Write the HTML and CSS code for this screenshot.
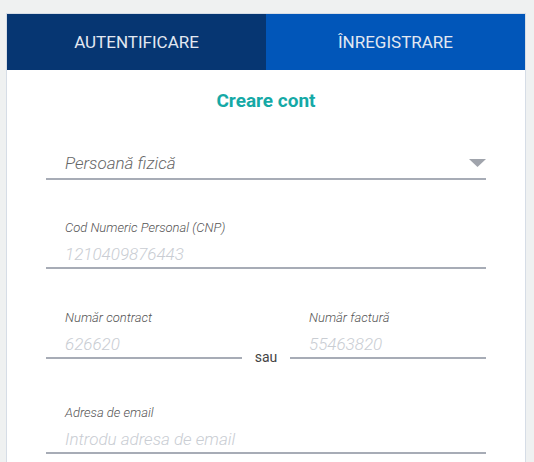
FILE: index.html
```html
<!DOCTYPE html>
<html lang="ro">
  <head>
    <meta charset="UTF-8" />
    <meta name="viewport" content="width=device-width, initial-scale=1.0" />
    <title>Creare cont</title>
    <link rel="stylesheet" href="styles.css">
  </head>
  <body>
    <main class="card">
      <nav class="tabs">
        <a class="tab tab-login" href="#">AUTENTIFICARE</a>
        <a class="tab tab-register" href="#">ÎNREGISTRARE</a>
      </nav>
      <form class="form-register" action="">
        <h2 class="titlu">Creare cont</h2>

        <div class="select">
          <span>Persoană fizică</span>
          <svg class="select-arrow" width="17" height="8" viewBox="0 0 17 8">
            <polygon points="0,0 17,0 8.5,8" fill="#a0a4ac" />
          </svg>
        </div>

        <label class="field">
          <span class="field-label">Cod Numeric Personal (CNP)</span>
          <input type="text" name="cnp" placeholder="1210409876443" />
        </label>

        <div class="field-row">
          <label class="field">
            <span class="field-label">Număr contract</span>
            <input type="text" name="contract" placeholder="626620" />
          </label>
          <span class="sau">sau</span>
          <label class="field">
            <span class="field-label">Număr factură</span>
            <input type="text" name="factura" placeholder="55463820" />
          </label>
        </div>

        <label class="field field-email">
          <span class="field-label">Adresa de email</span>
          <input type="email" name="email" placeholder="Introdu adresa de email" />
        </label>
      </form>
    </main>
  </body>
</html>
```

FILE: styles.css
```css
:root {
  --navy: #063672;
  --blue: #0156b9;
  --teal: #15a9a6;
  --line: #a7acb6;
  --text-color: #5e5e5e;
}

html {
  box-sizing: border-box;
  font-size: 16px;
}

*,
*::before,
*::after {
  box-sizing: border-box;
}

body {
  margin: 0;
  height: 462px;
  overflow: hidden;
  background-color: #eff1f1;
  font-family: Roboto, "Liberation Sans", sans-serif;
  color: var(--text-color);
}

.card {
  margin: 13px 8px 0 6px;
  min-height: 460px;
  background-color: #fff;
  border: 1px solid #d6dde6;
  border-bottom: none;
}

.tabs {
  display: grid;
  grid-template-columns: 1fr 1fr;
  height: 56px;
}

.tab {
  display: flex;
  align-items: center;
  justify-content: center;
  color: #e2e8f1;
  font-size: 17px;
  text-decoration: none;
}

.tab-login {
  background-color: var(--navy);
}

.tab-register {
  background-color: var(--blue);
}

.form-register {
  display: flex;
  flex-direction: column;
  padding: 21px 39px 0 39px;
}

.titlu {
  margin: 0;
  font-size: 19px;
  line-height: 20px;
  font-weight: 700;
  text-align: center;
  color: var(--teal);
}

.select {
  display: flex;
  align-items: center;
  justify-content: space-between;
  margin-top: 39px;
  height: 26px;
  padding: 0 0 2px 19px;
  border-bottom: 2px solid var(--line);
  font-size: 17px;
  line-height: 26px;
  font-style: italic;
  font-weight: 300;
  color: #666;
  box-sizing: content-box;
}

.field {
  display: block;
  margin-top: 40px;
  padding-left: 19px;
  border-bottom: 2px solid var(--line);
}

.field-label {
  display: block;
  margin-bottom: 6px;
  font-size: 13px;
  line-height: 16px;
  font-style: italic;
  font-weight: 300;
  color: #555;
}

.field input {
  display: block;
  width: 100%;
  height: 25px;
  padding: 0;
  border: none;
  outline: none;
  background: transparent;
  font-family: inherit;
  font-size: 17px;
  line-height: 25px;
  font-style: italic;
  font-weight: 300;
  color: #555;
}

.field input::placeholder {
  color: #c9cdd3;
}

.field-row {
  display: grid;
  grid-template-columns: 1fr 48px 1fr;
  align-items: end;
  margin-top: 41px;
}

.field-row .field {
  margin-top: 0;
}

.sau {
  margin-bottom: -6px;
  font-size: 14px;
  line-height: 16px;
  text-align: center;
  color: #444;
}

.field-email {
  margin-top: 46px;
}
```
